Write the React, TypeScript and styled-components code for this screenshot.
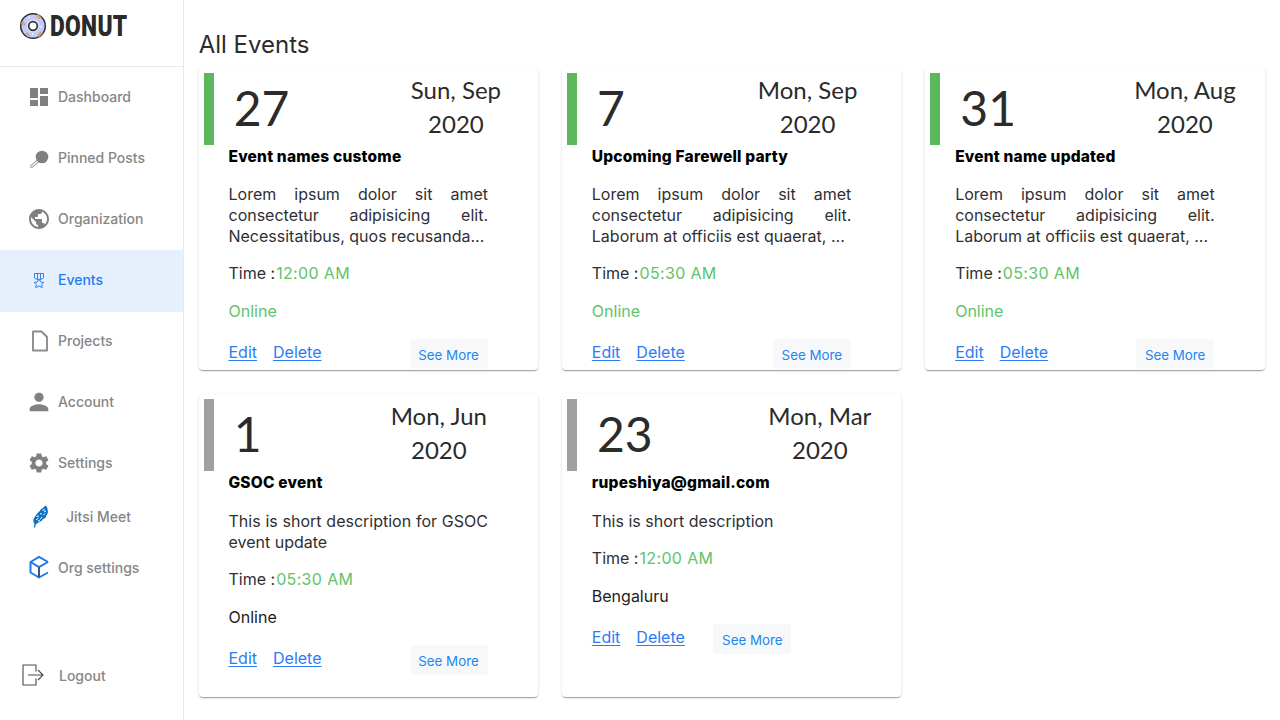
import React from 'react';
import styled, { createGlobalStyle } from 'styled-components';
import { MdDashboard, MdPublic, MdPerson, MdSettings } from 'react-icons/md';

const GlobalStyle = createGlobalStyle`
  html, body {
    margin: 0;
    padding: 0;
    height: 100%;
    background: #fff;
    font-family: Inter, "Liberation Sans", sans-serif;
  }
  #root {
    height: 100%;
  }
`;

const Page = styled.div`
  display: flex;
  height: 720px;
  overflow: hidden;
`;

const Sidebar = styled.aside`
  width: 184px;
  flex: none;
  box-sizing: border-box;
  border-right: 1px solid #e4e9f0;
  display: flex;
  flex-direction: column;
`;

const Brand = styled.div`
  height: 67px;
  box-sizing: border-box;
  border-bottom: 1px solid #e6e8ec;
  display: flex;
  align-items: flex-start;
  padding: 12px 0 0 19px;
  gap: 3px;
`;

const BrandName = styled.span`
  font-family: Roboto, sans-serif;
  font-weight: 900;
  font-size: 30px;
  line-height: 28px;
  color: #2a2a2a;
  letter-spacing: 0.4px;
  transform: scaleX(0.76);
  transform-origin: left center;
`;

const NavItem = styled.div<{ $active?: boolean; $height?: number; $gap?: number; $left?: number; $bottom?: number }>`
  height: ${(p) => p.$height ?? 61}px;
  box-sizing: border-box;
  display: flex;
  align-items: center;
  padding-left: ${(p) => p.$left ?? 27}px;
  padding-bottom: ${(p) => p.$bottom ?? 2}px;
  gap: ${(p) => p.$gap ?? 7}px;
  font-size: 14px;
  font-weight: 450;
  color: ${(p) => (p.$active ? '#1f7bf2' : '#868686')};
  background: ${(p) => (p.$active ? '#e5f0fc' : 'transparent')};
  svg {
    flex: none;
  }
`;

const NavSpacer = styled.div`
  flex: 1;
`;

const LogoutItem = styled(NavItem)`
  margin-bottom: 22px;
`;

const PersonIcon = styled(MdPerson)`
  margin: 0 -2px;
`;

const Main = styled.main`
  flex: 1;
  min-width: 0;
  padding: 29px 15.3px 0 14.7px;
`;

const Title = styled.h1`
  margin: 0 0 7px;
  font-size: 24px;
  line-height: 32px;
  font-weight: 400;
  color: #2b2b2b;
`;

const Grid = styled.div`
  display: grid;
  grid-template-columns: repeat(3, 1fr);
  grid-template-rows: 302px 303px;
  gap: 24px;
`;

const Card = styled.article`
  background: #fff;
  border-radius: 4px;
  box-shadow: 0 2px 1px -1px rgba(0, 0, 0, 0.2), 0 1px 1px 0 rgba(0, 0, 0, 0.14),
    0 1px 3px 0 rgba(0, 0, 0, 0.12);
  padding: 6px 0 0 5px;
  box-sizing: border-box;
`;

const CardHead = styled.div`
  display: flex;
  height: 72px;
`;

const Bar = styled.div<{ $live: boolean }>`
  width: 10px;
  height: 72px;
  margin-top: -1px;
  flex: none;
  background: ${(p) => (p.$live ? '#5cb85c' : '#a0a0a0')};
`;

const Day = styled.div`
  font-family: Lato, sans-serif;
  font-size: 48px;
  line-height: 68px;
  color: #2b2b2b;
  margin-left: 20px;
`;

const DateText = styled.div<{ $right: number }>`
  margin-left: auto;
  margin-top: -1px;
  margin-right: ${(p) => p.$right}px;
  font-family: Lato, sans-serif;
  font-size: 24px;
  line-height: 34px;
  color: #2b2b2b;
  text-align: center;
`;

const CardBody = styled.div`
  width: 259.5px;
  margin-left: 24.8px;
`;

const EventName = styled.h2`
  margin: 1px 0 0;
  font-size: 15.5px;
  line-height: 20px;
  font-weight: 800;
  letter-spacing: 0.2px;
  white-space: nowrap;
  color: #000;
`;

const Description = styled.p<{ $second: boolean }>`
  margin: ${(p) => (p.$second ? 18 : 17)}px 0 0;
  font-size: 16px;
  line-height: 21px;
  color: #2f2f33;
  text-align: justify;
`;

const TimeRow = styled.p`
  margin: 16px 0 0;
  font-size: 16px;
  line-height: 21px;
  color: #2f2f33;
`;

const TimeValue = styled.span`
  color: #5fc46a;
  margin-left: 1px;
  letter-spacing: 0.35px;
`;

const Place = styled.p<{ $online: boolean }>`
  margin: 17px 0 0;
  font-size: 16px;
  line-height: 21px;
  color: ${(p) => (p.$online ? '#5fc46a' : '#1c1c1c')};
`;

const Actions = styled.div`
  margin-top: 19px;
  display: flex;
  align-items: flex-start;
  gap: 16px;
  height: 30px;
`;

const ActionLink = styled.a`
  font-size: 16px;
  line-height: 21px;
  margin-top: 1px;
  color: #2a7cf6;
  text-decoration: underline;
  text-underline-offset: 2px;
`;

const SeeMore = styled.button<{ $left: number }>`
  margin-left: ${(p) => p.$left - 16}px;
  margin-top: -2px;
  height: 30px;
  width: 78px;
  padding: 2px 0 0;
  border: none;
  border-radius: 3px;
  background: #f7f8fa;
  color: #1c86f2;
  font-family: Inter, sans-serif;
  font-size: 13.33px;
  flex: none;
`;

const Pin = () => (
  <svg width="24" height="24" viewBox="0 0 24 24" fill="none">
    <path d="M4.5 20.5 L12 14" stroke="#999" strokeWidth="3" strokeLinecap="round" />
    <path d="M4.5 20.5 L12 14" stroke="#fff" strokeWidth="1.2" strokeLinecap="round" />
    <circle cx="15" cy="11" r="6.3" fill="#808080" />
  </svg>
);

const Medal = () => (
  <svg width="24" height="24" viewBox="0 0 24 24" fill="none" stroke="#2f84ee" strokeWidth="1">
    <path d="M7.5 5.5 H16.5 V10 L12 12.5 L7.5 10 Z M10.5 5.5 V11.5 M13.5 5.5 V11.5" />
    <path d="M12 10.8 L13.6 14 L17 14.4 L14.5 16.6 L15.3 19.6 L12 18 L8.7 19.6 L9.5 16.6 L7 14.4 L10.4 14 Z" fill="#e5f0fc" />
  </svg>
);

const FileIcon = () => (
  <svg width="24" height="24" viewBox="0 0 24 24" fill="none" stroke="#8c8c8c" strokeWidth="1.9">
    <path d="M6 2.5 H14.5 L20 8 V21.5 H6 Z" strokeLinejoin="round" />
  </svg>
);

const Feather = () => (
  <svg width="22" height="24" viewBox="0 0 22 24" fill="none">
    <path d="M4.5 23.5 C4.8 21.5 5 20.5 5.5 19" stroke="#0b6fc2" strokeWidth="1.3" />
    <path
      d="M5 20 C3 19 3 16 4 14 C5 13 5 12 7 10 C8 9 8 8 10 7 C10 5 12 5 13 4 C14 3 15 2 16 1.5 C16.5 3 18 4 17.5 6 C18.5 8 17.5 10 16.5 11 C16.5 13 14.5 15 13 15 C12 17 9 18.5 8 18.5 C7 20 6 20.5 5 20 Z"
      fill="#0b6fc2"
    />
    <path
      d="M6 16 L8.5 14 M6.5 12.5 L9 12 M10 15.5 L12 13 M10 10 L12 9.5 M13 11.5 L15 9.5 M12.5 6.5 L15 5.5 M14 8 L16 7 M8 17 L10 16.5"
      stroke="#fff"
      strokeWidth="1"
    />
  </svg>
);

const Cube = () => (
  <svg width="24" height="24" viewBox="0 0 24 24" fill="none" stroke="#1f78ec" strokeWidth="2">
    <path d="M21 7 L12 1.8 L3.5 7 V17.5 L12 22.5 L21 17.5" strokeLinejoin="round" />
    <path d="M3.5 7 L12 12 L21 7" />
    <path d="M12 12 V22.5" stroke="#34587f" />
  </svg>
);

const LogoutIcon = () => (
  <svg width="22" height="22" viewBox="0 0 22 22" fill="none" stroke="#444b52" strokeWidth="1.1">
    <path d="M14 7.5 V1 H1 V21 H14 V14.5" strokeLinejoin="round" />
    <path d="M6 11 H21 M16 6 L21 11 L16 16" />
  </svg>
);

const Donut = () => (
  <svg width="28" height="28" viewBox="0 0 28 28">
    <circle cx="14" cy="14" r="12.3" fill="#c2caf6" stroke="#2d3038" strokeWidth="1.5" />
    <circle cx="10" cy="5.5" r="1" fill="#eef0fd" />
    <circle cx="22" cy="15" r="1" fill="#eef0fd" />
    <circle cx="14" cy="22" r="1" fill="#eef0fd" />
    <path d="M3 10 L6 13 M7 21 L10 24.5 M19 24 L22.5 20.5 M18 3 L21.5 6.5" stroke="#cfa582" strokeWidth="3" />
    <circle cx="14" cy="14" r="6.4" fill="#e3e6fb" />
    <circle cx="14" cy="14" r="4.3" fill="#fff" stroke="#2d3038" strokeWidth="1.7" />
  </svg>
);

interface EventData {
  day: number;
  date: string;
  year: number;
  right: number;
  live: boolean;
  name: string;
  description: string;
  time: string;
  place: string;
  seeMoreLeft: number;
  second: boolean;
}

const lorem1 = 'Lorem ipsum dolor sit amet consectetur adipisicing elit. Necessitatibus, quos recusanda...';
const lorem2 = 'Lorem ipsum dolor sit amet consectetur adipisicing elit. Laborum at officiis est quaerat, ...';

const events: EventData[] = [
  { day: 27, date: 'Sun, Sep', year: 2020, right: 37, live: true, name: 'Event names custome', description: lorem1, time: '12:00 AM', place: 'Online', seeMoreLeft: 88, second: false },
  { day: 7, date: 'Mon, Sep', year: 2020, right: 44, live: true, name: 'Upcoming Farewell party', description: lorem2, time: '05:30 AM', place: 'Online', seeMoreLeft: 88, second: false },
  { day: 31, date: 'Mon, Aug', year: 2020, right: 29, live: true, name: 'Event name updated', description: lorem2, time: '05:30 AM', place: 'Online', seeMoreLeft: 88, second: false },
  { day: 1, date: 'Mon, Jun', year: 2020, right: 51, live: false, name: 'GSOC event', description: 'This is short description for GSOC event update', time: '05:30 AM', place: 'Online', seeMoreLeft: 88, second: true },
  { day: 23, date: 'Mon, Mar', year: 2020, right: 30, live: false, name: 'rupeshiya@gmail.com', description: 'This is short description', time: '12:00 AM', place: 'Bengaluru', seeMoreLeft: 28.5, second: true },
];

const EventCard: React.FC<{ event: EventData }> = ({ event }) => (
  <Card>
    <CardHead>
      <Bar $live={event.live} />
      <Day>{event.day}</Day>
      <DateText $right={event.right}>
        {event.date}
        <br />
        {event.year}
      </DateText>
    </CardHead>
    <CardBody>
      <EventName>{event.name}</EventName>
      <Description $second={event.second}>{event.description}</Description>
      <TimeRow>
        Time :<TimeValue>{event.time}</TimeValue>
      </TimeRow>
      <Place $online={event.live}>{event.place}</Place>
      <Actions>
        <ActionLink>Edit</ActionLink>
        <ActionLink>Delete</ActionLink>
        <SeeMore $left={event.seeMoreLeft}>See More</SeeMore>
      </Actions>
    </CardBody>
  </Card>
);

const App: React.FC = () => (
  <Page>
    <GlobalStyle />
    <Sidebar>
      <Brand>
        <Donut />
        <BrandName>DONUT</BrandName>
      </Brand>
      <NavItem><MdDashboard size={24} color="#808080" />Dashboard</NavItem>
      <NavItem><Pin />Pinned Posts</NavItem>
      <NavItem><MdPublic size={24} color="#808080" />Organization</NavItem>
      <NavItem $active $height={62} $bottom={3}><Medal />Events</NavItem>
      <NavItem $height={60} $bottom={3}><FileIcon />Projects</NavItem>
      <NavItem><PersonIcon size={28} color="#808080" />Account</NavItem>
      <NavItem><MdSettings size={24} color="#808080" />Settings</NavItem>
      <NavItem $height={46} $left={30} $gap={14}><Feather />Jitsi Meet</NavItem>
      <NavItem $height={56}><Cube />Org settings</NavItem>
      <NavSpacer />
      <LogoutItem $height={44} $left={22} $gap={15}><LogoutIcon />Logout</LogoutItem>
    </Sidebar>
    <Main>
      <Title>All Events</Title>
      <Grid>
        {events.map((event) => (
          <EventCard key={event.name} event={event} />
        ))}
      </Grid>
    </Main>
  </Page>
);

export default App;
